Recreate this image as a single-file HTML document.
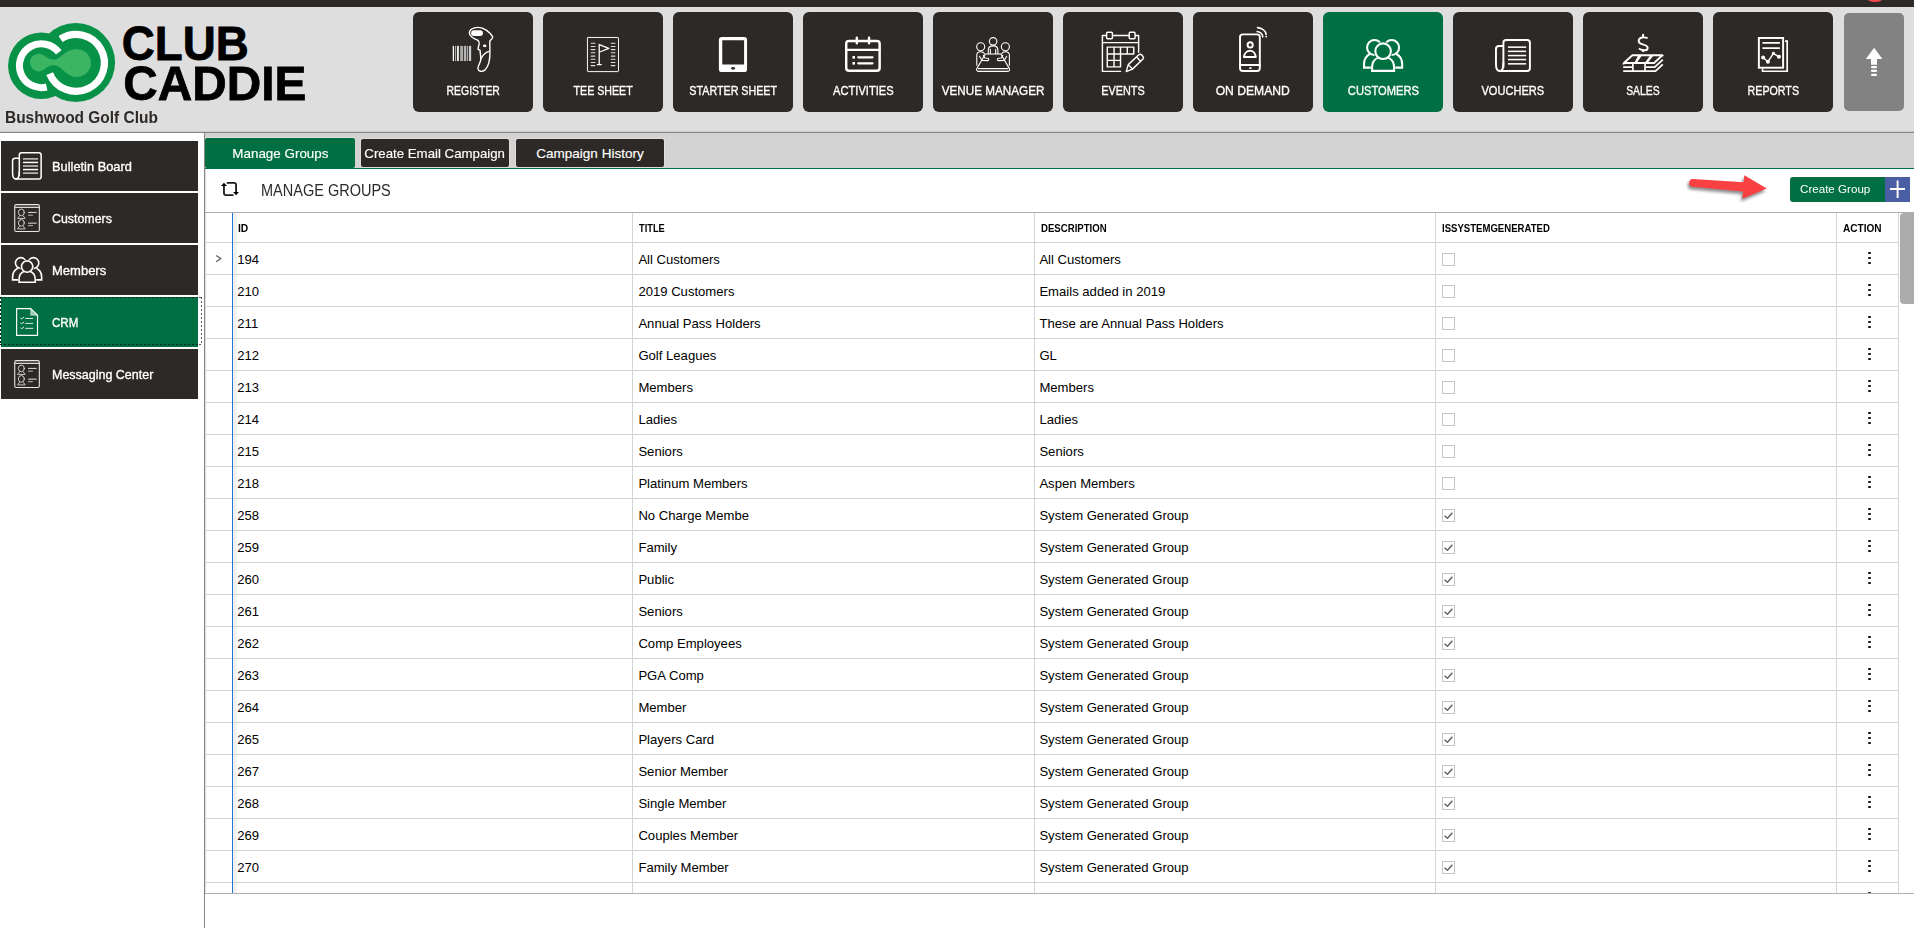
<!DOCTYPE html><html><head><meta charset="utf-8"><title>Club Caddie - Manage Groups</title><style>*{margin:0;padding:0;box-sizing:border-box}
html,body{width:1914px;height:928px;overflow:hidden;background:#fff;font-family:"Liberation Sans",sans-serif;color:#000}
body{position:relative}
body>div,body>svg{position:absolute}
#topbar{left:0;top:0;width:1914px;height:7px;background:#2d2926}
#reddot{left:1866px;top:-9px;width:18px;height:11px;border-radius:50%;background:#f44848}
#header{left:0;top:7px;width:1914px;height:124px;background:#dedede}
#hline{left:0;top:131px;width:1914px;height:2px;background:linear-gradient(#cdcdcd 0 50%,#868686 50% 100%)}
.tx{position:absolute;line-height:20px;white-space:nowrap}
.m{display:inline-block;transform-origin:0 50%}
#club{left:4.8px;font-size:15.6px;font-weight:bold;color:#2d2926}
.nav{top:12px;width:120px;height:100px;background:#2d2926;border-radius:6px}
.nav.act{background:#007042}
.nav .lab{left:0;right:0;text-align:center;color:#fff;font-size:13px}
.nav .lab .m{transform-origin:50% 50%}
.nav svg{position:absolute}
#up{left:1844px;top:13px;width:60px;height:98px;background:#828282;border-radius:5px}
#sidebar{left:0;top:133px;width:204px;height:795px;background:#fff}
#vline{left:204px;top:132px;width:1px;height:796px;background:#858585}
#vline2{left:205px;top:169px;width:1px;height:759px;background:#dedede}
.sb{left:1px;width:197px;height:50px;background:#2d2926}
.sb.act{background:#007042}
.sb .lab{left:51.2px;color:#fff;font-size:13.2px}
.sb svg{position:absolute}

#tabstrip{left:205px;top:133px;width:1709px;height:35px;background:#d3d3d3}
#gline{left:205px;top:168px;width:1709px;height:1px;background:#007042}
.tab{top:139px;height:28px;background:#2d2926;color:#fff;font-size:13.5px;text-align:center;border-radius:2px}
.tab .tx{left:0;right:0;text-align:center}
.tab .m{transform-origin:50% 50%}
.t1{left:205px;width:150px;top:138px;height:30px;background:#007042}

.t2{left:361px;width:148px}
.t3{left:516px;width:148px}
#title{left:260.5px;font-size:15.8px;color:#2a2a2a}
#cg{left:1790px;top:177px;width:95px;height:25px;background:#007042;border-radius:3px 0 0 3px;color:#fff;font-size:11.6px}
#cg .tx{left:10.4px}
#cgp{left:1885px;top:177px;width:25px;height:25px;background:#4a5ea3}
#grid{left:206px;top:212px;width:1708px;height:681px;overflow:hidden;background:#fff}
#grid>*{position:absolute}
.hl{left:0;width:1692px;height:1px;background:#d0d0d0}
.vl{top:0;width:1px;height:681px;background:#d4d4d4}
.vb{top:0;width:1px;height:681px;background:#1f78d1}
.th{font-size:11px;font-weight:bold}
.r{left:0;width:1692px;height:31px;font-size:13.1px;line-height:20px}
.r>*{position:absolute;white-space:nowrap;top:7.4px}
.c1{left:31.3px}.c2{left:432.4px}.c3{left:833.4px}
.cb{left:1236px;top:10px;width:13px;height:13px;border:1px solid #c4c4c4;background:#fff}
.dots{left:1661.7px;top:9.4px;width:4px;height:13px}
.dots u{position:absolute;left:0;width:3.2px;height:2px;border-radius:0.8px;background:#1a1a1a;display:block}
.dots u:nth-child(1){top:0}.dots u:nth-child(2){top:5px}.dots u:nth-child(3){top:10px}
#gbottom{left:205px;top:893px;width:1709px;height:1px;background:#b0b0b0}
#below{left:205px;top:894px;width:1709px;height:34px;background:#fff}
#sbthumb{left:1900px;top:213px;width:24px;height:91px;background:#acacac;border-radius:4px}

.shade{left:27px;top:1px;width:4px;height:680px;background:#f1f1f1}
#gtop{left:205px;top:212px;width:1709px;height:1px;background:#adadad}
#up svg{position:absolute}
.nav .lab,.sb .lab{-webkit-text-stroke:0.35px #fff}
.tab .tx{-webkit-text-stroke:0.15px #fff}
.t2,.t3{box-shadow:0 0 0 1px #e0dcdc}
.t1{box-shadow:0 -1px 0 0 #e0dcdc}
</style></head><body>
<div id="topbar"></div><div id="reddot"></div>
<div id="header"></div><div id="hline"></div>
<svg id="logo" style="left:0;top:14px" width="330" height="100" viewBox="0 0 330 100">
<g transform="scale(0.10341)">
<circle cx="400" cy="500" r="322" fill="#079247"/>
<circle cx="732" cy="469" r="381" fill="#079247"/>
<path d="M 568.2 370.9 A 212 212 0 1 0 451.3 705.7" fill="none" stroke="#fff" stroke-width="68"/>
<path d="M 585.2 242.4 A 275 275 0 1 1 480.0 576.0" fill="none" stroke="#fff" stroke-width="70"/>
<path d="M 290 470 C 290 420 330 385 375 385 C 430 385 450 440 520 440 C 590 440 620 340 740 340 C 820 340 880 400 880 475 C 880 550 820 610 740 610 C 640 610 600 495 520 495 C 450 495 430 555 375 555 C 330 555 290 520 290 470 Z" fill="#3bb562"/>
</g>
<text x="121.8" y="46.2" font-family="'Liberation Sans',sans-serif" font-weight="bold" font-size="48.6" textLength="127" lengthAdjust="spacingAndGlyphs" fill="#000" stroke="#000" stroke-width="0.8">CLUB</text>
<text x="123.3" y="85.6" font-family="'Liberation Sans',sans-serif" font-weight="bold" font-size="48.6" textLength="183" lengthAdjust="spacingAndGlyphs" fill="#000" stroke="#000" stroke-width="0.8">CADDIE</text>
</svg>
<div id="club" class="tx" style="top:108.29px"><span class="m" style="transform:scaleX(0.9916);">Bushwood Golf Club</span></div>
<div class="nav" style="left:413px"><svg style="left:20px;top:8px" width="80" height="60" viewBox="0 0 1237 928" fill="none" stroke="#fff" stroke-linecap="round" stroke-linejoin="round">
<g stroke="none">
<rect x="305" y="400" width="20" height="235" fill="#fff"/>
<rect x="340" y="400" width="14" height="235" fill="#bbb"/>
<rect x="370" y="400" width="30" height="235" fill="#eee"/>
<rect x="420" y="400" width="45" height="235" fill="#aaa"/>
<rect x="478" y="400" width="37" height="235" fill="#b4b4b4"/>
<rect x="525" y="400" width="18" height="235" fill="#aaa"/>
<rect x="556" y="400" width="34" height="235" fill="#ccc"/>
<rect x="590" y="160" width="182" height="86" rx="43" fill="#fff"/>
<ellipse cx="800" cy="400" rx="28" ry="20" fill="#fff"/>
</g>
<path stroke-width="22" d="M 564 210 C 555 150 620 114 700 114 C 790 114 880 190 922 258 C 930 280 900 300 878 328 L 880 480 C 884 600 862 720 800 775 C 760 808 700 798 695 750 C 690 700 742 665 740 600 L 728 470 L 696 452 L 706 400 C 722 370 712 330 690 312 C 640 290 575 265 564 210 Z"/>
<path stroke-width="20" d="M 742 600 C 770 540 815 500 868 486"/>
</svg><div class="lab tx" style="top:68.70px"><span class="m" style="transform:scaleX(0.8019);">REGISTER</span></div></div>
<div class="nav" style="left:543px"><svg style="left:20px;top:8px" width="80" height="60" viewBox="0 0 1237 928" fill="none" stroke="#fff" stroke-linecap="round" stroke-linejoin="round">
<rect x="378" y="270" width="480" height="528" rx="10" stroke-width="15"/>
<g stroke-width="17" stroke="#ddd"><path d="M 436 360 L 494 360"/><path d="M 436 410 L 494 410"/><path d="M 436 458 L 494 458"/><path d="M 436 506 L 494 506"/><path d="M 436 558 L 494 558"/><path d="M 436 608 L 494 608"/><path d="M 436 658 L 494 658"/><path d="M 436 705 L 494 705"/><path d="M 746 360 L 804 360"/><path d="M 746 410 L 804 410"/><path d="M 746 458 L 804 458"/><path d="M 746 506 L 804 506"/><path d="M 746 558 L 804 558"/><path d="M 746 608 L 804 608"/><path d="M 746 658 L 804 658"/><path d="M 746 705 L 804 705"/></g>
<path stroke-width="20" d="M 560 378 L 560 690 M 532 690 L 592 690 M 562 382 L 708 440 L 568 495"/>
</svg><div class="lab tx" style="top:68.70px"><span class="m" style="transform:scaleX(0.8194);">TEE SHEET</span></div></div>
<div class="nav" style="left:673px"><svg style="left:20px;top:8px" width="80" height="60" viewBox="0 0 1237 928" fill="none" stroke="#fff" stroke-linecap="round" stroke-linejoin="round">
<rect x="400" y="262" width="436" height="544" rx="46" fill="#fff" stroke="none"/>
<rect x="452" y="312" width="338" height="378" rx="10" fill="#2d2926" stroke="none"/>
<ellipse cx="620" cy="748" rx="30" ry="22" fill="#2d2926" stroke="none"/>
</svg><div class="lab tx" style="top:68.70px"><span class="m" style="transform:scaleX(0.8240);">STARTER SHEET</span></div></div>
<div class="nav" style="left:803px"><svg style="left:20px;top:8px" width="80" height="60" viewBox="0 0 1237 928" fill="none" stroke="#fff" stroke-linecap="round" stroke-linejoin="round">
<rect x="359" y="324" width="517" height="462" rx="42" stroke-width="38"/>
<path stroke-width="38" d="M 359 462 L 876 462 M 523 275 L 523 360 M 712 275 L 712 360"/>
<path stroke-width="36" d="M 545 578 L 765 578 M 545 670 L 765 670"/>
<rect x="455" y="558" width="40" height="40" fill="#fff" stroke="none"/>
<rect x="455" y="650" width="40" height="40" fill="#fff" stroke="none"/>
</svg><div class="lab tx" style="top:68.70px"><span class="m" style="transform:scaleX(0.8560);">ACTIVITIES</span></div></div>
<div class="nav" style="left:933px"><svg style="left:20px;top:8px" width="80" height="60" viewBox="0 0 1237 928" fill="none" stroke="#fff" stroke-linecap="round" stroke-linejoin="round">
<g stroke-width="17">
<circle cx="620" cy="330" r="58"/>
<circle cx="428" cy="415" r="62"/>
<circle cx="810" cy="415" r="62"/>
<path d="M 545 522 L 545 470 C 545 420 575 400 620 400 C 665 400 695 420 695 470 L 695 522"/>
<path d="M 578 522 L 578 455 M 660 522 L 660 455"/>
<path d="M 500 525 L 740 525 L 872 752 C 880 775 870 795 850 795 L 390 795 C 370 795 358 775 368 752 Z"/>
<path d="M 392 752 L 848 752"/>
<path d="M 368 700 L 368 540 C 368 505 395 490 428 490 C 455 490 475 500 485 520"/>
<path d="M 410 562 L 448 625 L 535 628 C 560 625 560 595 535 592 L 492 588 L 470 545"/>
<path d="M 872 700 L 872 540 C 872 505 845 490 810 490 C 785 490 765 500 755 520"/>
<path d="M 830 562 L 792 625 L 705 628 C 680 625 680 595 705 592 L 748 588 L 770 545"/>
</g>
</svg><div class="lab tx" style="top:68.70px"><span class="m" style="transform:scaleX(0.9006);">VENUE MANAGER</span></div></div>
<div class="nav" style="left:1063px"><svg style="left:20px;top:8px" width="80" height="60" viewBox="0 0 1237 928" fill="none" stroke="#fff" stroke-linecap="round" stroke-linejoin="round">
<g stroke-width="22">
<path d="M 580 795 L 300 795 L 300 240 L 860 240 L 860 500"/>
<path d="M 300 350 L 860 350"/>
<rect x="365" y="190" width="90" height="100" rx="14" fill="#2d2926"/>
<rect x="715" y="190" width="90" height="100" rx="14" fill="#2d2926"/>
<path d="M 375 420 L 785 420 L 785 525 L 580 525 L 580 725 L 375 725 Z M 375 525 L 580 525 M 375 625 L 580 625 M 480 420 L 480 725 M 580 420 L 580 525 M 685 420 L 685 525"/>
<path d="M 700 690 L 855 545 C 875 525 895 525 912 545 L 925 560 C 940 578 940 595 920 612 L 765 760 L 668 798 Z M 700 690 L 765 760 M 830 572 L 890 640"/>
</g>
</svg><div class="lab tx" style="top:68.70px"><span class="m" style="transform:scaleX(0.8324);">EVENTS</span></div></div>
<div class="nav" style="left:1193px"><svg style="left:20px;top:8px" width="80" height="60" viewBox="0 0 1237 928" fill="none" stroke="#fff" stroke-linecap="round" stroke-linejoin="round">
<g stroke-width="30">
<rect x="418" y="222" width="306" height="568" rx="42"/>
<path d="M 418 695 L 724 695"/>
<circle cx="575" cy="385" r="40"/>
<path d="M 478 572 C 485 510 530 475 572 475 C 615 475 655 510 662 572 Z"/>
<path stroke-width="24" d="M 682 178 C 730 185 765 215 770 262"/>
<path stroke-width="24" d="M 688 118 C 760 125 815 170 822 225"/>
</g>
<ellipse cx="578" cy="743" rx="24" ry="14" fill="#fff" stroke="none"/>
<circle cx="822" cy="258" r="13" fill="#fff" stroke="none"/>
</svg><div class="lab tx" style="top:68.70px"><span class="m" style="transform:scaleX(0.9339);">ON DEMAND</span></div></div>
<div class="nav act" style="left:1323px"><svg style="left:20px;top:8px" width="80" height="60" viewBox="0 0 1237 928" fill="none" stroke="#fff" stroke-linecap="round" stroke-linejoin="round"><g stroke-width="32" stroke-linejoin="miter" stroke-linecap="butt"><circle cx="487" cy="425" r="115"/><path d="M 620 737 L 325 737 L 325 687 C 325 607 370 547 420 522"/><circle cx="753" cy="425" r="115"/><path d="M 620 737 L 915 737 L 915 687 C 915 607 870 547 820 522"/><path d="M 450 787 L 450 732 C 450 657 495 602 545 582 L 695 582 C 745 602 790 657 790 732 L 790 787 Z" fill="#007042" stroke="#007042" stroke-width="40.0"/><circle cx="620" cy="482" r="120" fill="#007042" stroke="#007042" stroke-width="54.4"/><path d="M 450 787 L 450 732 C 450 657 495 602 545 582 L 695 582 C 745 602 790 657 790 732 L 790 787 Z" fill="#007042"/><circle cx="620" cy="482" r="120" fill="#007042"/></g></svg><div class="lab tx" style="top:68.70px"><span class="m" style="transform:scaleX(0.8596);">CUSTOMERS</span></div></div>
<div class="nav" style="left:1453px"><svg style="left:20px;top:8px" width="80" height="60" viewBox="0 0 1237 928" fill="none" stroke="#fff" stroke-linecap="round" stroke-linejoin="round"><g stroke-width="30"><path d="M 470 730 L 470 352 Q 470 310 512 310 L 838 310 Q 880 310 880 352 L 880 748 Q 880 790 838 790 L 415 790 C 370 790 355 740 355 680 L 355 452 Q 355 402 405 402 L 470 402"/><path d="M 415 790 C 455 790 470 730 470 660"/></g><path stroke="#fff" stroke-width="24" stroke-linecap="butt" d="M 540 420 L 822 420"/><path stroke="#fff" stroke-width="24" stroke-linecap="butt" d="M 540 485 L 822 485"/><path stroke="#fff" stroke-width="24" stroke-linecap="butt" d="M 540 550 L 822 550"/><path stroke="#fff" stroke-width="24" stroke-linecap="butt" d="M 540 612 L 822 612"/><path stroke="#fff" stroke-width="24" stroke-linecap="butt" d="M 540 678 L 822 678"/></svg><div class="lab tx" style="top:68.70px"><span class="m" style="transform:scaleX(0.8509);">VOUCHERS</span></div></div>
<div class="nav" style="left:1583px"><svg style="left:20px;top:8px" width="80" height="60" viewBox="0 0 1237 928" fill="none" stroke="#fff" stroke-linecap="round" stroke-linejoin="round">
<g stroke-width="30" stroke-linecap="butt">
<path d="M 690 280 C 640 262 560 262 552 318 C 548 365 600 372 625 380 C 660 390 698 400 690 440 C 680 480 610 478 555 440"/>
<path d="M 620 215 L 620 275 M 620 455 L 620 495"/>
</g>
<g stroke-width="28" stroke-linejoin="miter" stroke-linecap="butt">
<path d="M 455 545 L 918 545 L 790 665 L 322 665 Z" stroke-linejoin="round"/>
<path d="M 543 548 L 602 548 L 522 662 L 486 662 Z M 728 548 L 782 548 L 692 662 L 648 662 Z" fill="#fff" stroke="none"/>
<path d="M 318 665 L 318 690"/>
<path d="M 312 730 L 450 730 M 665 730 L 800 730 L 925 612"/>
<path d="M 312 792 L 812 792 L 925 685"/>
<path d="M 925 545 L 925 560"/>
<path d="M 462 665 L 462 792 M 650 665 L 650 792" stroke-width="26"/>
</g>
</svg><div class="lab tx" style="top:68.70px"><span class="m" style="transform:scaleX(0.8015);">SALES</span></div></div>
<div class="nav" style="left:1713px"><svg style="left:20px;top:8px" width="80" height="60" viewBox="0 0 1237 928" fill="none" stroke="#fff" stroke-linecap="round" stroke-linejoin="round">
<rect x="400" y="278" width="375" height="460" stroke-width="30" stroke-linejoin="miter"/>
<path stroke-width="26" stroke-linejoin="miter" stroke-linecap="butt" d="M 805 327 L 838 327 L 838 793 L 457 793 L 457 755"/>
<path stroke-width="28" stroke-linecap="butt" d="M 455 355 L 725 355 M 455 435 L 725 435"/>
<path stroke-width="22" d="M 465 580 L 540 645 L 625 515 L 710 570"/>
<g fill="#fff" stroke="none"><circle cx="465" cy="580" r="31"/><circle cx="540" cy="647" r="31"/><circle cx="625" cy="515" r="23"/><circle cx="710" cy="570" r="31"/></g>
</svg><div class="lab tx" style="top:68.70px"><span class="m" style="transform:scaleX(0.8210);">REPORTS</span></div></div>
<div id="up"><svg style="left:-10px;top:7px" width="80" height="60" viewBox="0 0 1237 928" fill="#fff">
<path d="M 620 430 L 748 602 L 665 602 L 665 692 L 572 692 L 572 602 L 492 602 Z"/>
<rect x="572" y="710" width="93" height="36" rx="16"/><rect x="572" y="770" width="93" height="36" rx="16"/><rect x="572" y="830" width="93" height="36" rx="16"/>
</svg></div>
<div id="sidebar"></div><div id="vline"></div><div id="vline2"></div>
<div class="sb" style="top:141px"><svg style="left:0;top:0" width="60" height="50" viewBox="0 0 1114 928" fill="none" stroke="#fff" stroke-linecap="round" stroke-linejoin="round"><g stroke-width="28"><path d="M 340 645 L 340 262 Q 340 220 382 220 L 703 220 Q 745 220 745 262 L 745 663 Q 745 705 703 705 L 275 705 C 230 705 215 655 215 595 L 215 368 Q 215 318 265 318 L 340 318"/><path d="M 275 705 C 325 705 340 645 340 575"/></g><path stroke="#ccc" stroke-width="28" stroke-linecap="butt" d="M 408 332 L 688 332"/><path stroke="#fff" stroke-width="28" stroke-linecap="butt" d="M 408 398 L 688 398"/><path stroke="#ccc" stroke-width="28" stroke-linecap="butt" d="M 408 464 L 688 464"/><path stroke="#fff" stroke-width="28" stroke-linecap="butt" d="M 408 530 L 688 530"/><path stroke="#ccc" stroke-width="28" stroke-linecap="butt" d="M 408 596 L 688 596"/></svg><div class="lab tx" style="top:16.23px"><span class="m" style="transform:scaleX(0.9731);">Bulletin Board</span></div></div>
<div class="sb" style="top:193px"><svg style="left:0;top:0" width="60" height="50" viewBox="0 0 1114 928" fill="none" stroke="#fff" stroke-linecap="round" stroke-linejoin="round"><g stroke="#e8e8e8"><rect x="255" y="215" width="457" height="500" rx="26" stroke-width="20"/><path stroke-width="22" stroke-linecap="butt" d="M 255 266 L 712 266"/><ellipse cx="378" cy="360" rx="55" ry="62" stroke-width="16"/><path stroke-width="16" d="M 345 428 L 310 460 C 300 472 310 472 320 472 L 436 472 C 446 472 456 472 446 460 L 411 428"/><ellipse cx="378" cy="555" rx="55" ry="62" stroke-width="16"/><path stroke-width="16" d="M 345 623 L 310 655 C 300 667 310 667 320 667 L 436 667 C 446 667 456 667 446 655 L 411 623"/><path stroke-width="18" stroke-linecap="butt" d="M 503 360 L 662 360 M 503 560 L 662 560"/><path stroke-width="18" stroke-linecap="butt" stroke="#bbb" d="M 503 412 L 592 412 M 503 606 L 592 606"/></g></svg><div class="lab tx" style="top:16.23px"><span class="m" style="transform:scaleX(0.9394);">Customers</span></div></div>
<div class="sb" style="top:245px"><svg style="left:0;top:0" width="60" height="50" viewBox="0 0 1114 928" fill="none" stroke="#fff" stroke-linecap="round" stroke-linejoin="round"><g stroke-width="30" stroke-linejoin="miter" stroke-linecap="butt"><circle cx="368" cy="335" r="100"/><path d="M 485 648 L 215 648 L 215 598 C 215 518 260 458 310 433"/><circle cx="602" cy="335" r="100"/><path d="M 485 648 L 755 648 L 755 598 C 755 518 710 458 660 433"/><path d="M 335 692 L 335 637 C 335 562 380 507 430 487 L 540 487 C 590 507 635 562 635 637 L 635 692 Z" fill="#2d2926" stroke="#2d2926" stroke-width="37.5"/><circle cx="485" cy="400" r="105" fill="#2d2926" stroke="#2d2926" stroke-width="51.0"/><path d="M 335 692 L 335 637 C 335 562 380 507 430 487 L 540 487 C 590 507 635 562 635 637 L 635 692 Z" fill="#2d2926"/><circle cx="485" cy="400" r="105" fill="#2d2926"/></g></svg><div class="lab tx" style="top:16.23px"><span class="m" style="transform:scaleX(0.9860);">Members</span></div></div>
<div class="sb act" style="top:297px"><svg style="left:0;top:0" width="60" height="50" viewBox="0 0 1114 928" fill="none" stroke="#fff" stroke-linecap="round" stroke-linejoin="round">
<path stroke-width="22" stroke-linejoin="miter" d="M 290 215 L 552 215 L 678 338 L 678 712 L 290 712 Z"/>
<path d="M 552 228 L 552 338 L 665 338 Z" fill="#fff" fill-opacity="0.6" stroke="#fff" stroke-opacity="0.7" stroke-width="14"/>
<g stroke-width="18" stroke-linecap="butt" stroke="#e6f0ea"><path d="M 450 398 L 597 398 M 450 490 L 597 490 M 450 582 L 597 582"/>
<path d="M 360 388 L 385 405 L 428 372 M 360 480 L 385 497 L 428 464 M 360 572 L 385 589 L 428 556"/></g>
</svg><div class="lab tx" style="top:16.23px"><span class="m" style="transform:scaleX(0.8786);">CRM</span></div></div>
<div class="sb" style="top:349px"><svg style="left:0;top:0" width="60" height="50" viewBox="0 0 1114 928" fill="none" stroke="#fff" stroke-linecap="round" stroke-linejoin="round"><g stroke="#e8e8e8"><rect x="255" y="215" width="457" height="500" rx="26" stroke-width="20"/><path stroke-width="22" stroke-linecap="butt" d="M 255 266 L 712 266"/><ellipse cx="378" cy="360" rx="55" ry="62" stroke-width="16"/><path stroke-width="16" d="M 345 428 L 310 460 C 300 472 310 472 320 472 L 436 472 C 446 472 456 472 446 460 L 411 428"/><ellipse cx="378" cy="555" rx="55" ry="62" stroke-width="16"/><path stroke-width="16" d="M 345 623 L 310 655 C 300 667 310 667 320 667 L 436 667 C 446 667 456 667 446 655 L 411 623"/><path stroke-width="18" stroke-linecap="butt" d="M 503 360 L 662 360 M 503 560 L 662 560"/><path stroke-width="18" stroke-linecap="butt" stroke="#bbb" d="M 503 412 L 592 412 M 503 606 L 592 606"/></g></svg><div class="lab tx" style="top:16.23px"><span class="m" style="transform:scaleX(0.9465);">Messaging Center</span></div></div>
<svg style="left:0;top:297px" width="203" height="49" viewBox="0 0 203 49" fill="none" shape-rendering="crispEdges">
<path d="M 0 0.5 L 199 0.5 M 0 47.5 L 199 47.5 M 0.5 0 L 0.5 48" stroke="#0c2a1c" stroke-width="1" stroke-dasharray="2 2"/>
<path d="M 199 0.5 L 202 0.5 M 201.5 0 L 201.5 48 M 199 47.5 L 202 47.5" stroke="#555" stroke-width="1" stroke-dasharray="2 2"/>
</svg>
<div id="tabstrip"></div><div id="gline"></div>
<div class="tab t1"><div class="tx" style="top:5.52px"><span class="m" style="transform:scaleX(0.9937);">Manage Groups</span></div></div>
<div class="tab t2"><div class="tx" style="top:4.52px"><span class="m" style="transform:scaleX(0.9811);">Create Email Campaign</span></div></div>
<div class="tab t3"><div class="tx" style="top:4.52px"><span class="m" style="transform:scaleX(1.0000);">Campaign History</span></div></div>
<svg style="left:206px;top:170px" width="60" height="42" viewBox="0 0 1326 928" fill="none" stroke="#1c1c1c" stroke-width="40" stroke-linecap="round">
<path d="M 475 285 L 618 285 Q 665 285 665 332 L 665 480"/>
<path d="M 592 555 L 444 555 Q 397 555 397 508 L 397 355"/>
<path d="M 598 488 L 730 488 L 664 556 Z" fill="#000" stroke="none"/>
<path d="M 330 352 L 465 352 L 397 284 Z" fill="#000" stroke="none"/>
</svg>
<div id="title" class="tx" style="top:180.93px"><span class="m" style="transform:scaleX(0.9184);">MANAGE GROUPS</span></div>
<svg style="left:1680px;top:170px" width="234" height="40" viewBox="0 0 1914 327">
<defs><filter id="sh" x="-20%" y="-40%" width="140%" height="200%"><feGaussianBlur stdDeviation="12"/></filter></defs>
<g transform="translate(-12,22)" filter="url(#sh)" opacity="0.55"><path d="M 108 73 L 520 100 L 526 42 L 710 152 L 510 236 L 516 176 L 100 137 C 65 133 65 70 108 73 Z" fill="#333"/></g>
<path d="M 108 73 L 520 100 L 526 42 L 710 152 L 510 236 L 516 176 L 100 137 C 65 133 65 70 108 73 Z" fill="#f94144"/>
</svg>
<div id="cg"><div class="tx" style="top:2.48px"><span class="m" style="transform:scaleX(1.0007);">Create Group</span></div></div><div id="cgp"><svg style="position:absolute;left:0;top:0" width="25" height="25" viewBox="0 0 25 25" stroke="#fff" stroke-width="1.9" fill="none"><path d="M 12.6 3.4 L 12.6 20.9 M 5 12 L 20 12"/></svg></div>
<div id="grid">
<div class="shade"></div>
<div class="hl" style="top:30px"></div>
<div class="hl" style="top:62px"></div>
<div class="hl" style="top:94px"></div>
<div class="hl" style="top:126px"></div>
<div class="hl" style="top:158px"></div>
<div class="hl" style="top:190px"></div>
<div class="hl" style="top:222px"></div>
<div class="hl" style="top:254px"></div>
<div class="hl" style="top:286px"></div>
<div class="hl" style="top:318px"></div>
<div class="hl" style="top:350px"></div>
<div class="hl" style="top:382px"></div>
<div class="hl" style="top:414px"></div>
<div class="hl" style="top:446px"></div>
<div class="hl" style="top:478px"></div>
<div class="hl" style="top:510px"></div>
<div class="hl" style="top:542px"></div>
<div class="hl" style="top:574px"></div>
<div class="hl" style="top:606px"></div>
<div class="hl" style="top:638px"></div>
<div class="hl" style="top:670px"></div>
<div class="hl" style="top:702px"></div>
<div class="vb" style="left:26px"></div>
<div class="vl" style="left:426px"></div>
<div class="vl" style="left:828px"></div>
<div class="vl" style="left:1229px"></div>
<div class="vl" style="left:1630px"></div>
<div class="vl" style="left:1692px"></div>
<div class="th tx" style="left:32.3px;top:6.19px"><span class="m" style="transform:scaleX(0.9364);">ID</span></div>
<div class="th tx" style="left:433.1px;top:6.19px"><span class="m" style="transform:scaleX(0.8442);">TITLE</span></div>
<div class="th tx" style="left:834.6px;top:6.19px"><span class="m" style="transform:scaleX(0.8738);">DESCRIPTION</span></div>
<div class="th tx" style="left:1235.5px;top:6.19px"><span class="m" style="transform:scaleX(0.8702);">ISSYSTEMGENERATED</span></div>
<div class="th tx" style="left:1636.8px;top:6.19px"><span class="m" style="transform:scaleX(0.9153);">ACTION</span></div>
<svg style="left:8px;top:41px" width="10" height="12" viewBox="0 0 10 12" fill="none" stroke="#666" stroke-width="1.4"><path d="M 2.1 2.5 L 6.7 5.5 L 2.1 8.7"/></svg>
<div class="r" style="top:31px"><span class="c1">194</span><span class="c2">All Customers</span><span class="c3">All Customers</span><i class="cb"></i><b class="dots"><u></u><u></u><u></u></b></div>
<div class="r" style="top:63px"><span class="c1">210</span><span class="c2">2019 Customers</span><span class="c3">Emails added in 2019</span><i class="cb"></i><b class="dots"><u></u><u></u><u></u></b></div>
<div class="r" style="top:95px"><span class="c1">211</span><span class="c2">Annual Pass Holders</span><span class="c3">These are Annual Pass Holders</span><i class="cb"></i><b class="dots"><u></u><u></u><u></u></b></div>
<div class="r" style="top:127px"><span class="c1">212</span><span class="c2">Golf Leagues</span><span class="c3">GL</span><i class="cb"></i><b class="dots"><u></u><u></u><u></u></b></div>
<div class="r" style="top:159px"><span class="c1">213</span><span class="c2">Members</span><span class="c3">Members</span><i class="cb"></i><b class="dots"><u></u><u></u><u></u></b></div>
<div class="r" style="top:191px"><span class="c1">214</span><span class="c2">Ladies</span><span class="c3">Ladies</span><i class="cb"></i><b class="dots"><u></u><u></u><u></u></b></div>
<div class="r" style="top:223px"><span class="c1">215</span><span class="c2">Seniors</span><span class="c3">Seniors</span><i class="cb"></i><b class="dots"><u></u><u></u><u></u></b></div>
<div class="r" style="top:255px"><span class="c1">218</span><span class="c2">Platinum Members</span><span class="c3">Aspen Members</span><i class="cb"></i><b class="dots"><u></u><u></u><u></u></b></div>
<div class="r" style="top:287px"><span class="c1">258</span><span class="c2">No Charge Membe</span><span class="c3">System Generated Group</span><i class="cb"><svg style="position:absolute;left:-1px;top:-1px" width="13" height="13" viewBox="0 0 13 13" fill="none" stroke="#666" stroke-width="1.5"><path d="M 2.6 6.8 L 5.5 9.3 L 10.3 3.8"/></svg></i><b class="dots"><u></u><u></u><u></u></b></div>
<div class="r" style="top:319px"><span class="c1">259</span><span class="c2">Family</span><span class="c3">System Generated Group</span><i class="cb"><svg style="position:absolute;left:-1px;top:-1px" width="13" height="13" viewBox="0 0 13 13" fill="none" stroke="#666" stroke-width="1.5"><path d="M 2.6 6.8 L 5.5 9.3 L 10.3 3.8"/></svg></i><b class="dots"><u></u><u></u><u></u></b></div>
<div class="r" style="top:351px"><span class="c1">260</span><span class="c2">Public</span><span class="c3">System Generated Group</span><i class="cb"><svg style="position:absolute;left:-1px;top:-1px" width="13" height="13" viewBox="0 0 13 13" fill="none" stroke="#666" stroke-width="1.5"><path d="M 2.6 6.8 L 5.5 9.3 L 10.3 3.8"/></svg></i><b class="dots"><u></u><u></u><u></u></b></div>
<div class="r" style="top:383px"><span class="c1">261</span><span class="c2">Seniors</span><span class="c3">System Generated Group</span><i class="cb"><svg style="position:absolute;left:-1px;top:-1px" width="13" height="13" viewBox="0 0 13 13" fill="none" stroke="#666" stroke-width="1.5"><path d="M 2.6 6.8 L 5.5 9.3 L 10.3 3.8"/></svg></i><b class="dots"><u></u><u></u><u></u></b></div>
<div class="r" style="top:415px"><span class="c1">262</span><span class="c2">Comp Employees</span><span class="c3">System Generated Group</span><i class="cb"><svg style="position:absolute;left:-1px;top:-1px" width="13" height="13" viewBox="0 0 13 13" fill="none" stroke="#666" stroke-width="1.5"><path d="M 2.6 6.8 L 5.5 9.3 L 10.3 3.8"/></svg></i><b class="dots"><u></u><u></u><u></u></b></div>
<div class="r" style="top:447px"><span class="c1">263</span><span class="c2">PGA Comp</span><span class="c3">System Generated Group</span><i class="cb"><svg style="position:absolute;left:-1px;top:-1px" width="13" height="13" viewBox="0 0 13 13" fill="none" stroke="#666" stroke-width="1.5"><path d="M 2.6 6.8 L 5.5 9.3 L 10.3 3.8"/></svg></i><b class="dots"><u></u><u></u><u></u></b></div>
<div class="r" style="top:479px"><span class="c1">264</span><span class="c2">Member</span><span class="c3">System Generated Group</span><i class="cb"><svg style="position:absolute;left:-1px;top:-1px" width="13" height="13" viewBox="0 0 13 13" fill="none" stroke="#666" stroke-width="1.5"><path d="M 2.6 6.8 L 5.5 9.3 L 10.3 3.8"/></svg></i><b class="dots"><u></u><u></u><u></u></b></div>
<div class="r" style="top:511px"><span class="c1">265</span><span class="c2">Players Card</span><span class="c3">System Generated Group</span><i class="cb"><svg style="position:absolute;left:-1px;top:-1px" width="13" height="13" viewBox="0 0 13 13" fill="none" stroke="#666" stroke-width="1.5"><path d="M 2.6 6.8 L 5.5 9.3 L 10.3 3.8"/></svg></i><b class="dots"><u></u><u></u><u></u></b></div>
<div class="r" style="top:543px"><span class="c1">267</span><span class="c2">Senior Member</span><span class="c3">System Generated Group</span><i class="cb"><svg style="position:absolute;left:-1px;top:-1px" width="13" height="13" viewBox="0 0 13 13" fill="none" stroke="#666" stroke-width="1.5"><path d="M 2.6 6.8 L 5.5 9.3 L 10.3 3.8"/></svg></i><b class="dots"><u></u><u></u><u></u></b></div>
<div class="r" style="top:575px"><span class="c1">268</span><span class="c2">Single Member</span><span class="c3">System Generated Group</span><i class="cb"><svg style="position:absolute;left:-1px;top:-1px" width="13" height="13" viewBox="0 0 13 13" fill="none" stroke="#666" stroke-width="1.5"><path d="M 2.6 6.8 L 5.5 9.3 L 10.3 3.8"/></svg></i><b class="dots"><u></u><u></u><u></u></b></div>
<div class="r" style="top:607px"><span class="c1">269</span><span class="c2">Couples Member</span><span class="c3">System Generated Group</span><i class="cb"><svg style="position:absolute;left:-1px;top:-1px" width="13" height="13" viewBox="0 0 13 13" fill="none" stroke="#666" stroke-width="1.5"><path d="M 2.6 6.8 L 5.5 9.3 L 10.3 3.8"/></svg></i><b class="dots"><u></u><u></u><u></u></b></div>
<div class="r" style="top:639px"><span class="c1">270</span><span class="c2">Family Member</span><span class="c3">System Generated Group</span><i class="cb"><svg style="position:absolute;left:-1px;top:-1px" width="13" height="13" viewBox="0 0 13 13" fill="none" stroke="#666" stroke-width="1.5"><path d="M 2.6 6.8 L 5.5 9.3 L 10.3 3.8"/></svg></i><b class="dots"><u></u><u></u><u></u></b></div>
<div class="r" style="top:671px"><span class="c1"></span><span class="c2"></span><span class="c3"></span><i class="cb"><svg style="position:absolute;left:-1px;top:-1px" width="13" height="13" viewBox="0 0 13 13" fill="none" stroke="#666" stroke-width="1.5"><path d="M 2.6 6.8 L 5.5 9.3 L 10.3 3.8"/></svg></i><b class="dots"><u></u><u></u><u></u></b></div>
</div>
<div id="gtop"></div><div id="gbottom"></div><div id="below"></div>
<div id="sbthumb"></div>
</body></html>
